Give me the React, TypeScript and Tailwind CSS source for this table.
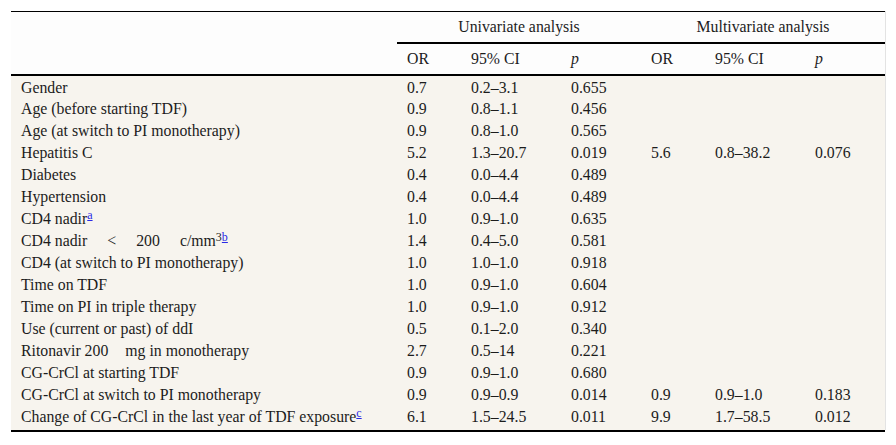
import React from "react";

type Row = { label: React.ReactNode; u: [string, string, string]; m?: [string, string, string] };

const Sup = ({ c }: { c: string }) => (
  <span className="relative -top-[5px] text-[12px] text-[#2a2ae6] underline leading-none">{c}</span>
);

const rows: Row[] = [
  { label: "Gender", u: ["0.7", "0.2–3.1", "0.655"] },
  { label: "Age (before starting TDF)", u: ["0.9", "0.8–1.1", "0.456"] },
  { label: "Age (at switch to PI monotherapy)", u: ["0.9", "0.8–1.0", "0.565"] },
  { label: "Hepatitis C", u: ["5.2", "1.3–20.7", "0.019"], m: ["5.6", "0.8–38.2", "0.076"] },
  { label: "Diabetes", u: ["0.4", "0.0–4.4", "0.489"] },
  { label: "Hypertension", u: ["0.4", "0.0–4.4", "0.489"] },
  { label: <>CD4 nadir<Sup c="a" /></>, u: ["1.0", "0.9–1.0", "0.635"] },
  {
    label: (
      <>
        CD4 nadir<span className="inline-block w-[20px]" />&lt;<span className="inline-block w-[20px]" />200<span className="inline-block w-[20px]" />c/mm<span className="relative -top-[5px] text-[12px] leading-none">3</span>
        <Sup c="b" />
      </>
    ),
    u: ["1.4", "0.4–5.0", "0.581"],
  },
  { label: "CD4 (at switch to PI monotherapy)", u: ["1.0", "1.0–1.0", "0.918"] },
  { label: "Time on TDF", u: ["1.0", "0.9–1.0", "0.604"] },
  { label: "Time on PI in triple therapy", u: ["1.0", "0.9–1.0", "0.912"] },
  { label: "Use (current or past) of ddI", u: ["0.5", "0.1–2.0", "0.340"] },
  {
    label: (
      <>
        Ritonavir 200<span className="inline-block w-[17px]" />mg in monotherapy
      </>
    ),
    u: ["2.7", "0.5–14", "0.221"],
  },
  { label: "CG-CrCl at starting TDF", u: ["0.9", "0.9–1.0", "0.680"] },
  { label: "CG-CrCl at switch to PI monotherapy", u: ["0.9", "0.9–0.9", "0.014"], m: ["0.9", "0.9–1.0", "0.183"] },
  {
    label: <>Change of CG-CrCl in the last year of TDF exposure<Sup c="c" /></>,
    u: ["6.1", "1.5–24.5", "0.011"],
    m: ["9.9", "1.7–58.5", "0.012"],
  },
];

const cell = "p-0 pl-[10px] pt-[3px] h-[22px] align-top";

export default function App() {
  return (
    <div className="w-[896px] h-[445px] bg-white pt-[11px] pl-[11px]" style={{ fontFamily: '"Liberation Serif", "Times New Roman", serif' }}>
      <div className="w-[875px] border-r border-[#e3e3e3] text-[15.8px] leading-[18px] text-[#1c1c1c]">
        <table className="w-[874px] border-collapse table-fixed">
          <colgroup>
            <col className="w-[386px]" />
            <col className="w-[64px]" />
            <col className="w-[100px]" />
            <col className="w-[80px]" />
            <col className="w-[64px]" />
            <col className="w-[100px]" />
            <col className="w-[80px]" />
          </colgroup>
          <thead className="bg-[#fdfdfd]">
            <tr className="border-t border-black h-[31px]">
              <th className="p-0" />
              <th colSpan={3} className="p-0 font-normal text-center border-b-2 border-black">Univariate analysis</th>
              <th colSpan={3} className="p-0 font-normal text-center border-b-2 border-black">Multivariate analysis</th>
            </tr>
            <tr className="h-[32px] border-b-2 border-black">
              <th className="p-0" />
              <th className="p-0 pl-[10px] font-normal text-left">OR</th>
              <th className="p-0 pl-[10px] font-normal text-left">95% CI</th>
              <th className="p-0 pl-[10px] font-normal text-left italic">p</th>
              <th className="p-0 pl-[10px] font-normal text-left">OR</th>
              <th className="p-0 pl-[10px] font-normal text-left">95% CI</th>
              <th className="p-0 pl-[10px] font-normal text-left italic">p</th>
            </tr>
          </thead>
          <tbody className="bg-[#f7f4ee]">
            {rows.map((r, i) => (
              <tr key={i}>
                <td className={cell + " whitespace-nowrap"}>{r.label}</td>
                {r.u.map((v, j) => (
                  <td key={j} className={cell}>{v}</td>
                ))}
                {(r.m ?? ["", "", ""]).map((v, j) => (
                  <td key={"m" + j} className={cell}>{v}</td>
                ))}
              </tr>
            ))}
          </tbody>
        </table>
        <div className="h-[3px] bg-[#f7f4ee]" />
      </div>
      <div className="w-[874px] border-t-2 border-black" />
    </div>
  );
}
